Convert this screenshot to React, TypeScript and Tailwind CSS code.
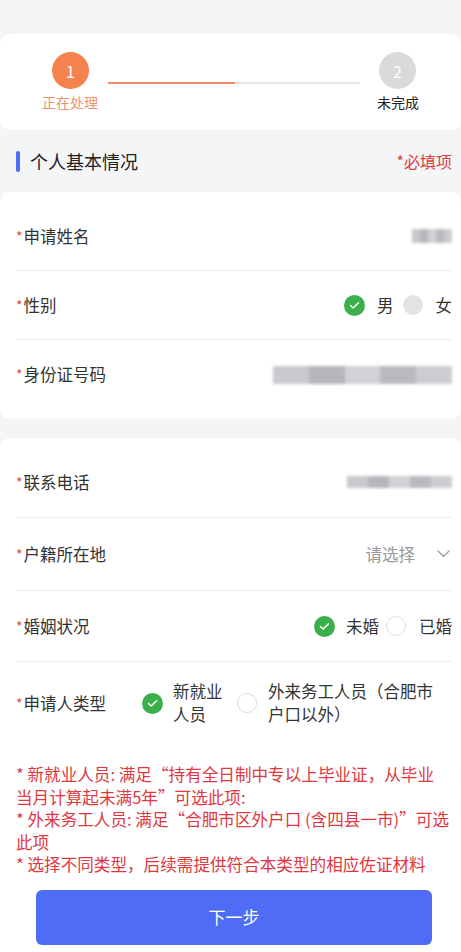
import React from 'react';

const font = { fontFamily: '"Noto Sans CJK SC", "Noto Sans", sans-serif' };

function Label({ text }: { text: string }) {
  return (
    <div className="flex items-center shrink-0 whitespace-nowrap text-[16.5px] text-[#333]">
      <span className="text-[#e0464f] text-[14px] mr-[1px]">*</span>
      {text}
    </div>
  );
}

function Checked() {
  return (
    <span className="w-[21px] h-[21px] rounded-full bg-[#3bb04a] flex items-center justify-center shrink-0">
      <svg width="11" height="9" viewBox="0 0 11 9" fill="none">
        <path d="M1.5 4.5 4.2 7 9.5 1.8" stroke="white" strokeWidth="1.5" strokeLinecap="round" strokeLinejoin="round" />
      </svg>
    </span>
  );
}

function Unchecked({ filled }: { filled?: boolean }) {
  return (
    <span
      className={`block w-[20px] h-[20px] rounded-full shrink-0 ${
        filled ? 'bg-[#e3e3e5]' : 'border border-[#dcdcdc] bg-white'
      }`}
    />
  );
}

function Blur({ w, h }: { w: number; h: number }) {
  return (
    <div className="flex blur-[1.5px]" style={{ width: w, height: h }}>
      <div className="flex-1 bg-[#c9c9ce]" />
      <div className="flex-1 bg-[#b6b6bc]" />
      <div className="flex-1 bg-[#d2d2d6]" />
      <div className="flex-1 bg-[#b9b9bf]" />
      <div className="flex-1 bg-[#cdcdd1]" />
    </div>
  );
}

function Row({ children, last }: { children: React.ReactNode; last?: boolean }) {
  return (
    <div className={`flex items-center justify-between ${last ? '' : 'border-b border-[#ececee]'}`}>
      {children}
    </div>
  );
}

export default function App() {
  return (
    <div className="min-h-[952px] bg-[#f4f5f7] pt-[34px]" style={font}>
      {/* steps */}
      <div className="bg-white rounded-[10px] h-[96px] pl-[52px] pr-[45px] pt-[18px]">
        <div className="flex items-center">
          <div className="w-[37px] h-[37px] rounded-full bg-[#f5814f] text-white text-[16px] flex items-center justify-center">1</div>
          <div className="flex-1 mx-[19px] h-[2px] bg-[#e6e6e6] flex mt-[24px]">
            <div className="w-[127px] h-[2px] bg-[#f08a66]" />
          </div>
          <div className="w-[37px] h-[37px] rounded-full bg-[#dadada] text-white text-[16px] flex items-center justify-center">2</div>
        </div>
        <div className="flex justify-between mt-[3px] text-[14px]">
          <span className="-ml-[10px] text-[#ea9472]">正在处理</span>
          <span className="-mr-[3px] text-[#222]">未完成</span>
        </div>
      </div>

      {/* section header */}
      <div className="h-[62px] flex items-center justify-between pl-[16px] pr-[9px]">
        <div className="flex items-center">
          <span className="w-[4px] h-[21px] rounded-[2px] bg-[#4c6ef5] mr-[10px]" />
          <span className="text-[18px] text-[#222]">个人基本情况</span>
        </div>
        <span className="text-[16px] text-[#e03c44]">*必填项</span>
      </div>

      {/* card 1 */}
      <div className="bg-white rounded-[10px] pl-[16px] pr-[9px] [&>div]:h-[69px] pt-[10px] pb-[10px]">
        <Row>
          <Label text="申请姓名" />
          <Blur w={40} h={14} />
        </Row>
        <Row>
          <Label text="性别" />
          <div className="flex items-center text-[16.5px] text-[#333]">
            <Checked />
            <span className="ml-[12px] mr-[9px]">男</span>
            <Unchecked filled />
            <span className="ml-[13px]">女</span>
          </div>
        </Row>
        <Row last>
          <Label text="身份证号码" />
          <Blur w={179} h={18} />
        </Row>
      </div>

      {/* card 2 */}
      <div className="mt-[19px] bg-white rounded-t-[10px] pl-[16px] pr-[9px] pt-[9px]">
        <Row>
          <div className="h-[70px] flex items-center"><Label text="联系电话" /></div>
          <Blur w={105} h={12} />
        </Row>
        <Row>
          <div className="h-[72px] flex items-center"><Label text="户籍所在地" /></div>
          <div className="flex items-center text-[16.5px] text-[#999]">
            <span>请选择</span>
            <svg className="ml-[22px] mr-[2px]" width="13" height="8" viewBox="0 0 13 8" fill="none">
              <path d="M1 1l5.5 5.5L12 1" stroke="#999" strokeWidth="1.3" strokeLinecap="round" strokeLinejoin="round" />
            </svg>
          </div>
        </Row>
        <Row>
          <div className="h-[70px] flex items-center"><Label text="婚姻状况" /></div>
          <div className="flex items-center text-[16.5px] text-[#333]">
            <Checked />
            <span className="ml-[11px] mr-[7px]">未婚</span>
            <Unchecked />
            <span className="ml-[13px]">已婚</span>
          </div>
        </Row>
        <Row last>
          <div className="h-[82px] flex items-center shrink-0"><Label text="申请人类型" /></div>
          <div className="flex items-center text-[16.5px] text-[#333] leading-[23px] flex-1 ml-[36px]">
            <Checked />
            <span className="ml-[10px] w-[50px]">新就业人员</span>
            <span className="ml-[14px]"><Unchecked /></span>
            <span className="ml-[11px] w-[174px]">外来务工人员（合肥市户口以外）</span>
          </div>
        </Row>

        <div className="mt-[19px] text-[16.6px] leading-[22.5px] text-[#e0373f] whitespace-nowrap">
          <p>* 新就业人员: 满足“持有全日制中专以上毕业证，从毕业<br />当月计算起未满5年”可选此项:</p>
          <p>* 外来务工人员: 满足“合肥市区外户口 (含四县一市)”可选<br />此项</p>
          <p>* 选择不同类型，后续需提供符合本类型的相应佐证材料</p>
        </div>

        <div className="mt-[14px] pb-[9px] pl-[20px]">
          <button className="w-[396px] h-[55px] rounded-[6px] bg-[#4e6cf4] text-white text-[17px]">下一步</button>
        </div>
      </div>
    </div>
  );
}
